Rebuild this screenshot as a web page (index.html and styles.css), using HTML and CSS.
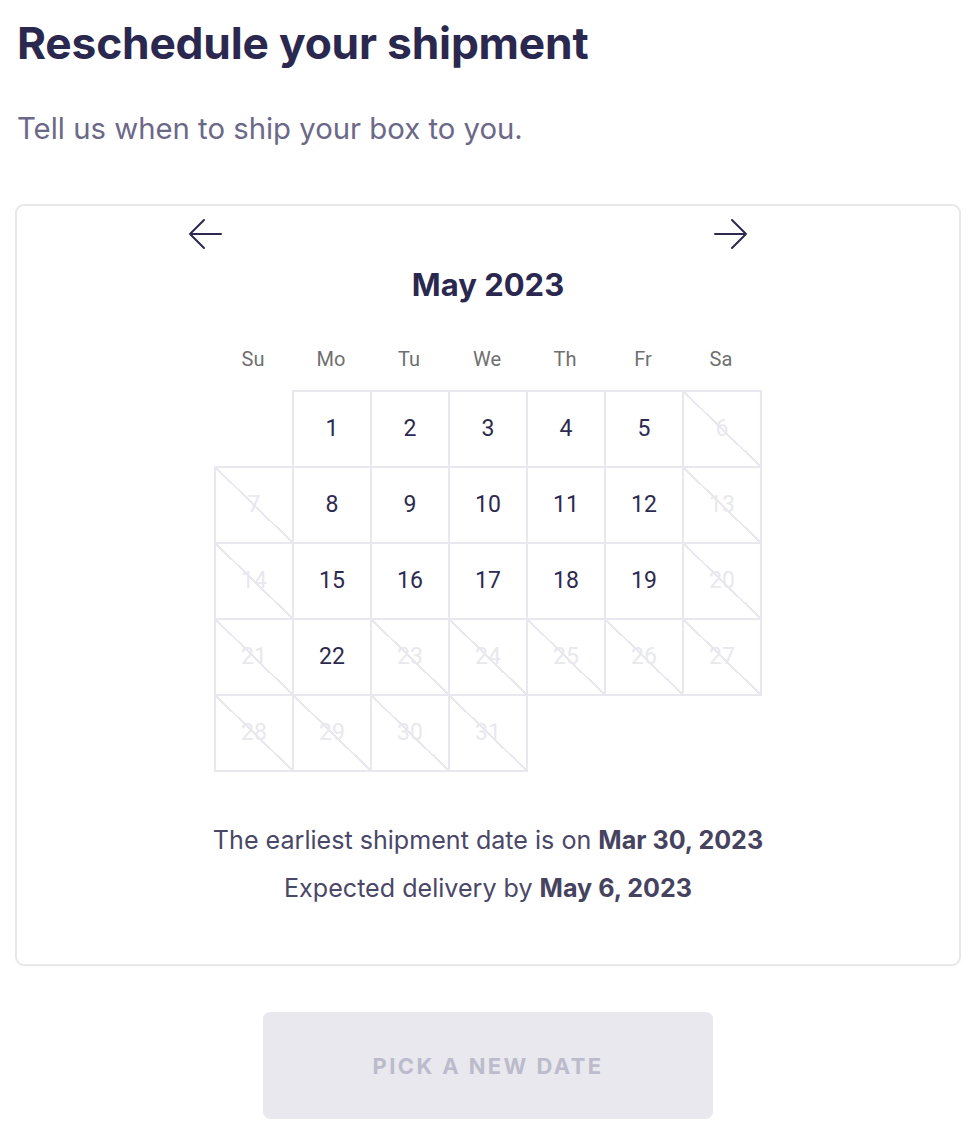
FILE: index.html
```html
<!DOCTYPE html>
<html lang="en">
<head>
<meta charset="utf-8">
<title>Reschedule your shipment</title>
<link rel="stylesheet" href="styles.css">
</head>
<body>
<main class="page">
  <h1 class="title">Reschedule your shipment</h1>
  <p class="subtitle">Tell us when to ship your box to you.</p>

  <section class="card">
    <div class="nav">
      <button class="nav-btn" aria-label="Previous month">
        <svg width="34" height="32" viewBox="0 0 34 32" fill="none" stroke="#2d2a4f" stroke-width="2" stroke-linecap="round" stroke-linejoin="round"><path d="M33 16H2M16 2L2 16l14 14"/></svg>
      </button>
      <button class="nav-btn" aria-label="Next month">
        <svg width="34" height="32" viewBox="0 0 34 32" fill="none" stroke="#2d2a4f" stroke-width="2" stroke-linecap="round" stroke-linejoin="round"><path d="M1 16h31M18 2l14 14-14 14"/></svg>
      </button>
    </div>
    <h2 class="month">May 2023</h2>

    <div class="weekdays">
      <span>Su</span><span>Mo</span><span>Tu</span><span>We</span><span>Th</span><span>Fr</span><span>Sa</span>
    </div>

    <div class="grid">
      <div class="cell empty"></div>
      <div class="cell">1</div>
      <div class="cell">2</div>
      <div class="cell">3</div>
      <div class="cell">4</div>
      <div class="cell">5</div>
      <div class="cell off">6</div>

      <div class="cell off">7</div>
      <div class="cell">8</div>
      <div class="cell">9</div>
      <div class="cell">10</div>
      <div class="cell">11</div>
      <div class="cell">12</div>
      <div class="cell off">13</div>

      <div class="cell off">14</div>
      <div class="cell">15</div>
      <div class="cell">16</div>
      <div class="cell">17</div>
      <div class="cell">18</div>
      <div class="cell">19</div>
      <div class="cell off">20</div>

      <div class="cell off">21</div>
      <div class="cell">22</div>
      <div class="cell off">23</div>
      <div class="cell off">24</div>
      <div class="cell off">25</div>
      <div class="cell off">26</div>
      <div class="cell off">27</div>

      <div class="cell off">28</div>
      <div class="cell off">29</div>
      <div class="cell off">30</div>
      <div class="cell off">31</div>
    </div>

    <div class="info">
      <p>The earliest shipment date is on <strong>Mar 30, 2023</strong></p>
      <p>Expected delivery by <strong>May 6, 2023</strong></p>
    </div>
  </section>

  <div class="actions">
    <button class="primary" disabled>PICK A NEW DATE</button>
  </div>
</main>
</body>
</html>
```

FILE: styles.css
```css
* { box-sizing: border-box; }

html, body {
  margin: 0;
  padding: 0;
  background: #ffffff;
}

body {
  font-family: "Inter", "Noto Sans", sans-serif;
  color: #2d2a4f;
}

.page {
  padding: 15px 13px 20px 15px;
}

.title {
  margin: 0 0 0 2px;
  font-size: 44.3px;
  line-height: 56px;
  font-weight: 700;
  letter-spacing: -0.2px;
  color: #2b2850;
}

.subtitle {
  margin: 39px 0 0 2px;
  font-size: 29.3px;
  line-height: 38px;
  font-weight: 400;
  color: #6b6888;
}

.card {
  margin-top: 56px;
  border: 2px solid #e8e8ea;
  border-radius: 9px;
  padding: 12px 0 52px;
  box-shadow: 0 1px 2px rgba(0,0,0,0.03);
}

.nav {
  display: flex;
  justify-content: space-between;
  padding: 0 211px 0 171px;
}

.nav-btn {
  background: none;
  border: 0;
  padding: 0;
  width: 34px;
  height: 32px;
  cursor: pointer;
  display: flex;
}

.month {
  margin: 15px 0 0;
  text-align: center;
  font-size: 31px;
  line-height: 40px;
  font-weight: 700;
  color: #2b2850;
}

.weekdays {
  margin: 40px auto 0;
  width: 548px;
  display: grid;
  grid-template-columns: repeat(7, 78px);
  font-family: "Roboto", sans-serif;
  font-size: 20px;
  line-height: 28px;
  color: #6f6f6f;
  text-align: center;
  padding-bottom: 17px;
}

.grid {
  margin: 0 auto;
  width: 548px;
  display: grid;
  grid-template-columns: repeat(7, 78px);
  grid-auto-rows: 76px;
}

.cell {
  position: relative;
  display: flex;
  align-items: center;
  justify-content: center;
  border: 2px solid #e8e8ee;
  margin: 0 -2px -2px 0;
  font-family: "Roboto", sans-serif;
  font-size: 23px;
  color: #2d2a4f;
  padding-bottom: 2px;
}

.cell.empty {
  border-color: transparent;
}

.cell.off {
  color: #e8e8ee;
  background: linear-gradient(to top right, transparent calc(50% - 1px), #e8e8ee calc(50% - 1px), #e8e8ee calc(50% + 1px), transparent calc(50% + 1px));
}

.info {
  margin-top: 46px;
  text-align: center;
  font-size: 25.1px;
  line-height: 48px;
  color: #4a4768;
}

.info p {
  margin: 0;
}

.info strong {
  font-weight: 700;
  color: #46435f;
}

.actions {
  display: flex;
  justify-content: center;
  margin-top: 46px;
}

.primary {
  width: 450px;
  height: 107px;
  border: 0;
  border-radius: 7px;
  background: #e8e8ee;
  color: #bcbbcb;
  font-family: "Inter", sans-serif;
  font-size: 22px;
  font-weight: 700;
  letter-spacing: 2.4px;
}
```
